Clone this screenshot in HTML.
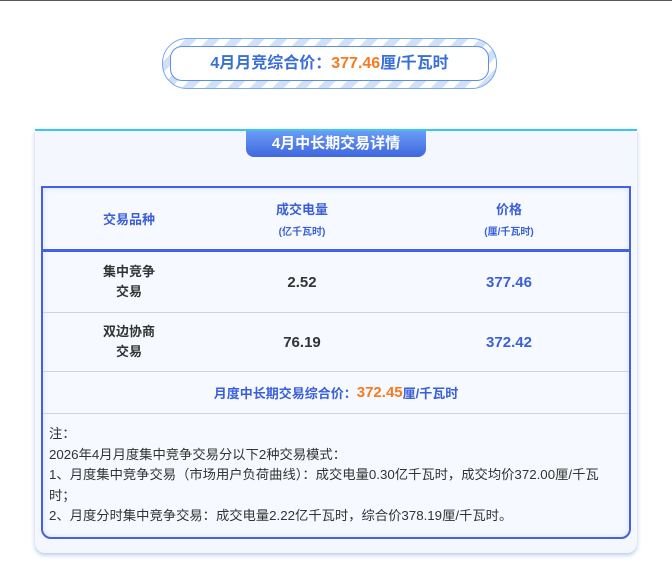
<!DOCTYPE html>
<html><head><meta charset="utf-8"><style>
*{margin:0;padding:0;box-sizing:border-box}
body{width:672px;height:564px;background:#fff;font-family:"Liberation Sans","Noto Sans CJK SC",sans-serif;position:relative;overflow:hidden;border-top:1px solid #555}
.badge{position:absolute;left:162px;top:37px;width:335px;height:51px;border-radius:25px;border:1.5px solid #7aa6ea;background:repeating-linear-gradient(135deg,#cfe0f8 0 8px,#fff 8px 16px)}
.badge .in{position:absolute;left:7px;top:7px;right:7px;bottom:7px;background:#fff;border:1.5px solid #5b8fe6;border-radius:12px;text-align:center;line-height:33px;font-size:16px;font-weight:bold;color:#3a6fd8}
.or{color:#f47b20}
.card{position:absolute;left:35px;top:128px;width:602px;height:424px;background:#f4f7fe;border-top:2px solid #3fc4f0;border-radius:0 0 10px 10px;box-shadow:0 2px 5px rgba(90,130,220,.45)}
.tab{position:absolute;left:211px;top:0;width:180px;height:26px;background:linear-gradient(#6a9bf5,#3f67e0);border-radius:0 0 8px 8px;color:#fff;font-weight:bold;font-size:15px;text-align:center;line-height:26px}
.tbl{position:absolute;left:6px;top:55px;width:590px;height:353px;border:2px solid #4361e0;border-radius:0 0 10px 10px;background:#f6f9ff;box-shadow:inset 0 0 6px rgba(100,130,220,.2)}
.row{position:absolute;left:0;right:0;display:flex;align-items:center;border-bottom:1px solid #cfd3dc}
.c1{width:172px;text-align:center}.c2{width:174px;text-align:center}.c3{flex:1;text-align:center}
.h{color:#3a5fd8;font-weight:bold;font-size:13px}
.h small{font-size:10px;display:block;margin-top:5px}
.n{color:#333;font-weight:bold;font-size:13px;line-height:20px}
.v{font-weight:bold;font-size:15px;color:#333}
.p{font-weight:bold;font-size:15px;color:#3a5fd8}
.notes{position:absolute;left:6px;top:236px;width:564px;font-size:13.3px;line-height:20.5px;color:#333}
</style></head><body>
<div class="badge"><div class="in">4月月竞综合价：<span class="or">377.46</span>厘/千瓦时</div></div>
<div class="card">
<div class="tab">4月中长期交易详情</div>
<div class="tbl">
<div class="row h" style="top:0;height:64px;border-bottom:3px solid #4361e0"><div class="c1">交易品种</div><div class="c2">成交电量<small>(亿千瓦时)</small></div><div class="c3">价格<small>(厘/千瓦时)</small></div></div>
<div class="row" style="top:64px;height:61px"><div class="c1 n">集中竞争<br>交易</div><div class="c2 v">2.52</div><div class="c3 p">377.46</div></div>
<div class="row" style="top:125px;height:59px"><div class="c1 n">双边协商<br>交易</div><div class="c2 v">76.19</div><div class="c3 p">372.42</div></div>
<div class="row" style="top:184px;height:42px;justify-content:center;font-size:13px;font-weight:bold;color:#3a5fd8">月度中长期交易综合价：<span class="or" style="font-size:15px">372.45</span>厘/千瓦时</div>
<div class="notes">注：<br>2026年4月月度集中竞争交易分以下2种交易模式：<br>1、月度集中竞争交易（市场用户负荷曲线）：成交电量0.30亿千瓦时，成交均价372.00厘/千瓦时；<br>2、月度分时集中竞争交易：成交电量2.22亿千瓦时，综合价378.19厘/千瓦时。</div>
</div></div>
</body></html>
